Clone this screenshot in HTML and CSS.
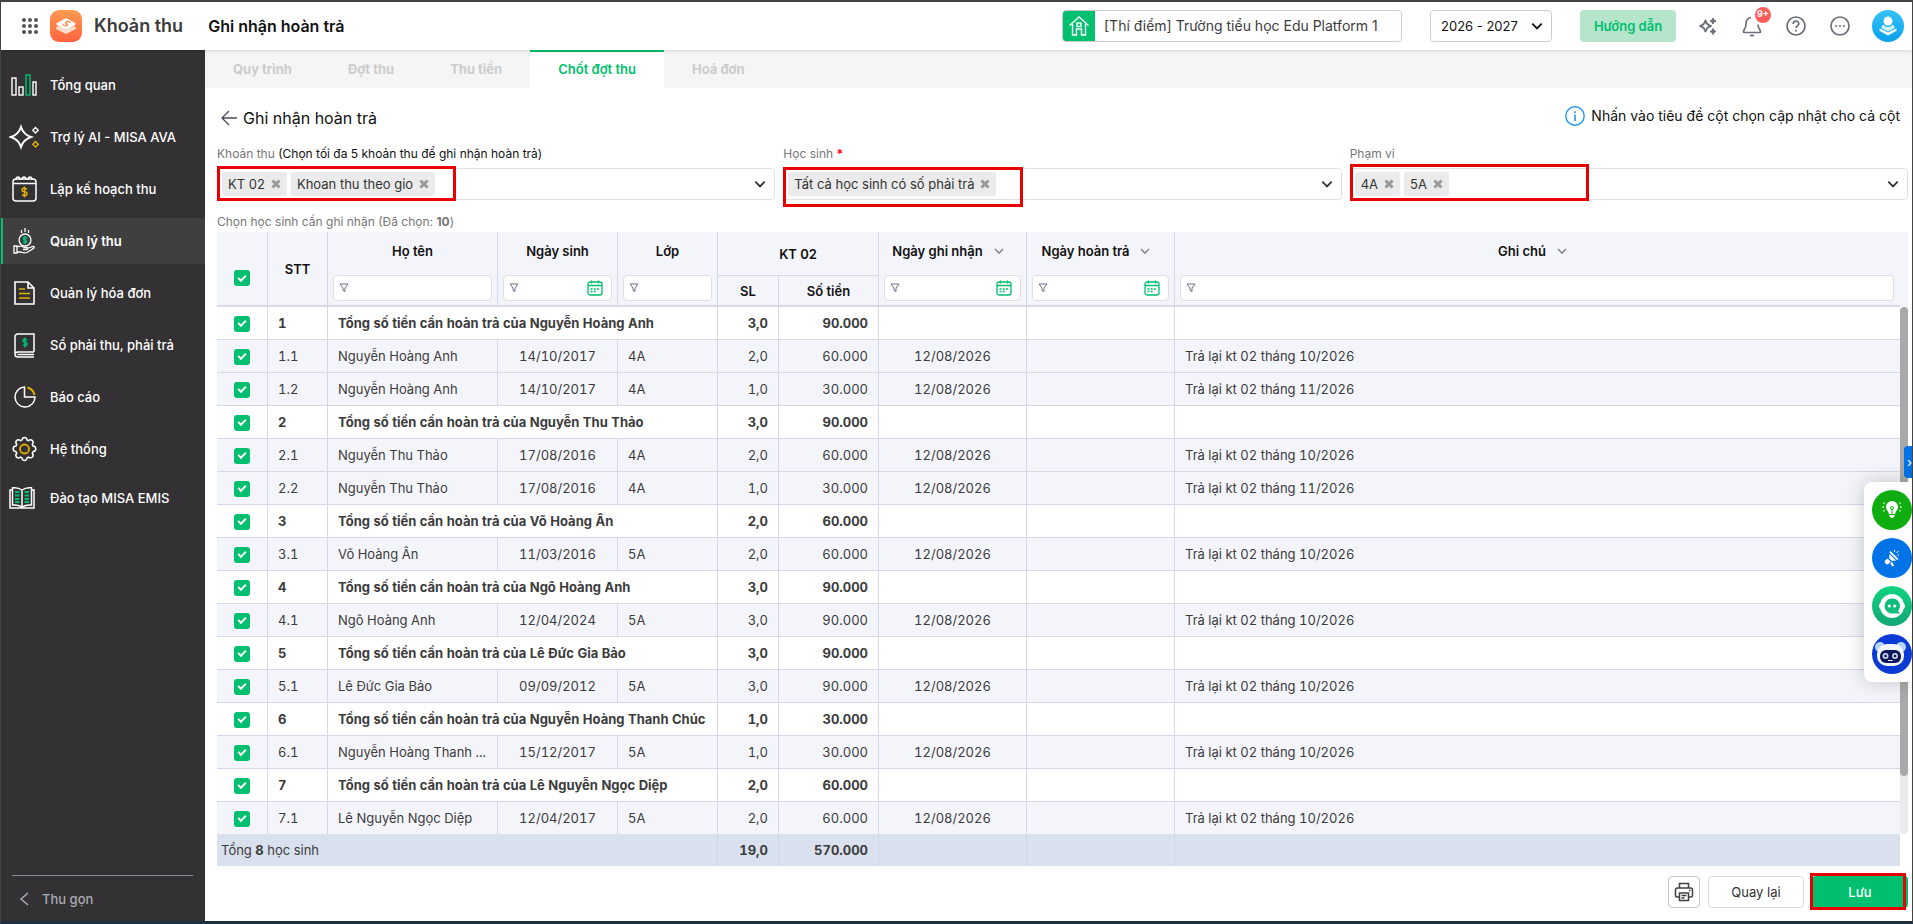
FILE: index.html
```
<!DOCTYPE html>
<html lang="vi">
<head>
  <meta charset="UTF-8">
  <title>Ghi nhận hoàn trả - Khoản thu</title>
  <meta name="viewport" content="width=device-width, initial-scale=1">
  <link rel="stylesheet" href="styles.css">
</head>
<body>
  <svg class="sprite" aria-hidden="true">
    <symbol id="i-down" viewBox="0 0 12 12"><path d="M2 4l4 4 4-4" fill="none" stroke="currentColor" stroke-width="1.6"/></symbol>
    <symbol id="i-close" viewBox="0 0 10 10"><path d="M1.500 1.500l7 7M8.500 1.500l-7 7" stroke="currentColor" stroke-width="3"/></symbol>
    <symbol id="i-filter" viewBox="0 0 10 10"><path d="M1 1h8L6 5v3.500L4 7.500V5z" fill="none" stroke="#6f6c85"/></symbol>
    <symbol id="i-calendar" viewBox="0 0 16 16"><rect x="1" y="2" width="14" height="13" rx="2" fill="none" stroke="#00bf6f" stroke-width="1.300"/><path d="M1 5.500h14M4.500 .5v3M11.500 .5v3" stroke="#00bf6f" stroke-width="1.300"/><path d="M3.500 9h9M3.500 11.500h6" stroke="#00bf6f" stroke-width="1.600" stroke-dasharray="2 1.200"/></symbol>
  </svg>

  <header class="header">
    <button class="icon-btn apps" aria-label="Ứng dụng">
      <svg width="16" height="16" viewBox="0 0 16 16" fill="#555"><circle cx="2" cy="2" r="2"/><circle cx="8" cy="2" r="2"/><circle cx="14" cy="2" r="2"/><circle cx="2" cy="8" r="2"/><circle cx="8" cy="8" r="2"/><circle cx="14" cy="8" r="2"/><circle cx="2" cy="14" r="2"/><circle cx="8" cy="14" r="2"/><circle cx="14" cy="14" r="2"/></svg>
    </button>
    <svg class="logo" width="32" height="32" viewBox="0 0 32 32">
      <defs><linearGradient id="orange" x1="0" y1="0" x2="0" y2="1"><stop offset="0" stop-color="#ff9b50"/><stop offset="1" stop-color="#ff6340"/></linearGradient></defs>
      <rect width="32" height="32" rx="9" fill="url(#orange)"/>
      <path d="M6 17.500l2-1.500 8 4 8-4 2 1.500q.6.900-.4 1.500l-8.600 4.600q-1 .5-2 0L6.400 19q-1-.6-.4-1.500z" fill="#ffe0cc"/>
      <path d="M7 13l8-4.500q1-.5 2 0l8 4.500q1.500 1 0 2l-8 4.500q-1 .5-2 0L7 15q-1.500-1 0-2z" fill="#fff"/>
      <path d="M19.500 12q-2-1.200-3.500.2-1.200 1.400.6 1.800 1.800.4.400 1.500-1.500 1-3.500-.2M12.500 14.500l1.500 1M18.500 11.500l2 1.400" fill="none" stroke="#ff8a4a" stroke-width="1.300"/>
    </svg>
    <span class="app-name">Khoản thu</span>
    <h1>Ghi nhận hoàn trả</h1>
    <button class="org">
      <span class="org-icon"><svg width="24" height="24" viewBox="0 0 24 24" fill="none" stroke="#fff" stroke-width="1.400"><path d="M2.500 11.500L12 3l9.500 8.500M5.500 10v11h4v-6h5v6h4V10"/><rect x="10" y="9" width="4" height="3.500"/></svg></span>
      <span class="org-name">[Thí điểm] Trường tiểu học Edu Platform 1</span>
    </button>
    <div class="year">
      <select aria-label="Năm học"><option>2026 - 2027</option></select>
      <svg width="14" height="14"><use href="#i-down"/></svg>
    </div>
    <button class="guide">Hướng dẫn</button>
    <div class="header-icons">
      <button class="icon-btn" aria-label="Trợ lý AI"><svg width="20" height="20" viewBox="0 0 20 20"><path d="M7.500 4q.8 5.200 6 6-5.200.8-6 6-.8-5.200-6-6 5.200-.8 6-6z" fill="none" stroke="#6b6f7a" stroke-width="1.800"/><path d="M15 2l1 2 2 1-2 1-1 2-1-2-2-1 2-1zM15 12.500l1 2 2 1-2 1-1 2-1-2-2-1 2-1z" fill="#6b6f7a" stroke="#6b6f7a"/></svg></button>
      <button class="icon-btn bell" aria-label="Thông báo"><svg width="20" height="22" viewBox="0 0 20 22" fill="none" stroke="#6b6f7a" stroke-width="1.700"><path d="M9 2.500C5.500 3 4 5.500 4 9c0 5-2.500 5.500-2.500 7.500 0 .8.500 1 1 1h15c.5 0 1-.2 1-1 0-2-2.500-2.500-2.500-7"/><path d="M8 20.500h4"/></svg><span class="badge">9+</span></button>
      <button class="icon-btn" aria-label="Trợ giúp"><svg width="20" height="20" viewBox="0 0 20 20" fill="none" stroke="#6b6f7a" stroke-width="1.700"><circle cx="10" cy="10" r="9"/><path d="M7.200 8c0-3.700 5.600-3.700 5.600-.2 0 2-2.800 2.200-2.800 4.200M10 13.700v1.800"/></svg></button>
      <button class="icon-btn" aria-label="Thêm"><svg width="20" height="20" viewBox="0 0 20 20"><circle cx="10" cy="10" r="9" fill="none" stroke="#6b6f7a" stroke-width="1.700"/><g fill="#6b6f7a"><circle cx="6" cy="10" r="1"/><circle cx="10" cy="10" r="1"/><circle cx="14" cy="10" r="1"/></g></svg></button>
    </div>
    <button class="icon-btn" aria-label="Tài khoản">
      <svg width="32" height="32" viewBox="0 0 32 32"><defs><linearGradient id="sky" x1="0" y1="0" x2="0" y2="1"><stop offset="0" stop-color="#35c3f8"/><stop offset="1" stop-color="#08a0ec"/></linearGradient></defs><circle cx="16" cy="16" r="16" fill="url(#sky)"/><circle cx="16" cy="11" r="4.500" fill="#fff"/><path d="M11 14.500q5 5 10 0l2 3.500-7 3.500L9 18z" fill="#d5f0fd"/><path d="M7.500 18.500L16 22.500l8.500-4v2.300L16 25.500l-8.500-4.700z" fill="#fff"/></svg>
    </button>
  </header>

  <div class="layout">
    <aside class="sidebar">
      <nav>
        <a href="#"><svg width="28" height="26" viewBox="0 0 28 26" fill="none" stroke="#fff" stroke-width="1.400"><rect x="3" y="6" width="4" height="17"/><rect x="10" y="15" width="4" height="8"/><rect x="17" y="3" width="4" height="20" stroke="#00bf6f"/><rect x="24" y="10" width="3" height="13"/></svg>Tổng quan</a>
        <a href="#"><svg width="30" height="26" viewBox="0 0 30 26" fill="none"><path d="M12 3q2.500 7.500 10 10-7.500 2.500-10 10Q9.500 15.500 2 13q7.500-2.500 10-10z" stroke="#fff" stroke-width="2"/><path d="M26.500 3.500l2.700 2.700-2.700 2.700-2.700-2.700z" stroke="#fff" stroke-width="1.400"/><path d="M26.500 17.500l2.700 2.700-2.700 2.700-2.700-2.700z" stroke="#e0b000" stroke-width="1.400"/></svg>Trợ lý AI - MISA AVA</a>
        <a href="#"><svg width="28" height="28" viewBox="0 0 28 28" fill="none" stroke="#fff" stroke-width="1.500"><rect x="4" y="4" width="23" height="22" rx="3"/><path d="M4 8.500h23M7 5q0-3 2-3t2 3M13 5q0-3 2-3t2 3M19 5q0-3 2-3t2 3"/><path d="M18 14q-5-2-5 .8 0 2 2.500 2t2.500 2q0 3-5 1M15.500 11.500v11" stroke="#e0b000"/></svg>Lập kế hoạch thu</a>
        <a href="#" class="active"><svg width="28" height="28" viewBox="0 0 28 28" fill="none" stroke="#fff" stroke-width="1.300"><circle cx="16" cy="13" r="6"/><path d="M16 1v4M12.500 3v3M19.500 3v3"/><path d="M18 11q-3.500-1.500-3.500.5 0 1.500 1.500 1.500t1.500 1.500q0 2-3.500.5M16 9v8" stroke="#00bf6f" stroke-width="1.600"/><path d="M5 19h3v7H5zM8 20q4-2 7 .5h3q1.500 1.500-.5 2H14M18 21.500l6-2q2 0 1 1.500l-7 4.500q-3 1-6-.5H8"/></svg>Quản lý thu</a>
        <a href="#"><svg width="28" height="28" viewBox="0 0 28 28" fill="none" stroke="#fff" stroke-width="1.600"><path d="M6 3h13l6 6v16H6zM19 3v6h6"/><path d="M10 10h6M10 14.500h11M10 19h11" stroke="#e0b000"/></svg>Quản lý hóa đơn</a>
        <a href="#"><svg width="28" height="28" viewBox="0 0 28 28" fill="none" stroke="#fff" stroke-width="1.500"><path d="M25 21V3H9q-3 0-3 3v16.500M25 21H9q-3 0-3 2.500T9 26h16M8.500 23.500H25"/><path d="M18 9q-4-2-4 .6 0 1.700 2 1.700t2 1.800q0 2.400-4 .8M16 6.500v10" stroke="#00bf6f"/></svg>Sổ phải thu, phải trả</a>
        <a href="#"><svg width="28" height="28" viewBox="0 0 28 28" fill="none" stroke="#fff" stroke-width="1.500"><path d="M15.500 4A10 10 0 1 0 26 14H15.500z"/><path d="M18.500 4.500a10 10 0 0 1 7 7.500" stroke="#e0b000" stroke-width="2"/></svg>Báo cáo</a>
        <a href="#"><svg width="28" height="28" viewBox="0 0 28 28" fill="none" stroke="#fff" stroke-width="1.500"><path d="M13 5q.3-2.500 2.500-2.500T18 5l1.500.7Q21.700 4 23.300 5.600T23.300 9.400L24 11q2.800.3 2.800 2.800T24 16.700l-.7 1.500q1.700 2.200.1 3.800t-3.900.1L18 23q-.3 2.500-2.500 2.500T13 23l-1.500-.8q-2.300 1.500-3.900-.1t.1-3.900L7 16.700q-2.800-.3-2.800-2.900T7 11l.7-1.600Q6 7.200 7.600 5.600t3.900.1z"/><circle cx="15.500" cy="14" r="4.500" stroke="#e0b000" stroke-width="1.800"/></svg>Hệ thống</a>
        <a href="#" class="training"><svg width="26" height="24" viewBox="0 0 26 24" fill="none" stroke="#fff" stroke-width="1.500"><path d="M13 4Q9 1 3.500 1.800V19q5.500-.5 9.500 2 4-2.500 9.500-2V1.800Q17 1 13 4v17"/><path d="M3.500 4H1v18h24V4h-2.500"/><path d="M6 6h4.500M6 9.500h4.500M6 13h4.500M6 16h4.500M15.500 6H20M15.500 9.500H20M15.500 13H20M15.500 16H20" stroke="#00bf6f" stroke-width="2"/></svg>Đào tạo MISA EMIS</a>
      </nav>
      <button class="collapse"><svg width="10" height="14" viewBox="0 0 10 14" fill="none" stroke="currentColor" stroke-width="1.500"><path d="M9 1L2 7l7 6"/></svg>Thu gọn</button>
    </aside>

    <main class="main">
      <nav class="tabs">
        <a href="#">Quy trình</a>
        <a href="#">Đợt thu</a>
        <a href="#">Thu tiền</a>
        <a href="#" class="active">Chốt đợt thu</a>
        <a href="#">Hoá đơn</a>
      </nav>

      <div class="content">
        <div class="title-row">
          <button class="icon-btn" aria-label="Trở lại"><svg width="18" height="18" viewBox="0 0 18 18" fill="none" stroke="#4a4a5a" stroke-width="1.300"><path d="M17 9H2M9 2L2 9l7 7"/></svg></button>
          <h2>Ghi nhận hoàn trả</h2>
          <span class="hint"><svg width="20" height="20" viewBox="0 0 20 20" fill="none" stroke="#2196f3"><circle cx="10" cy="10" r="9.200" stroke-width="1.400"/><path d="M10 8.500V15M10 5.200v1.800" stroke-width="1.600"/></svg>Nhấn vào tiêu đề cột chọn cập nhật cho cả cột</span>
        </div>

        <div class="fields">
          <div class="field">
            <label for="fee">Khoản thu <span>(Chọn tối đa 5 khoản thu để ghi nhận hoàn trả)</span></label>
            <div class="select mark-fee">
              <span class="chip">KT 02<button aria-label="Bỏ KT 02"><svg width="10" height="10"><use href="#i-close"/></svg></button></span>
              <span class="chip">Khoan thu theo gio<button aria-label="Bỏ Khoan thu theo gio"><svg width="10" height="10"><use href="#i-close"/></svg></button></span>
              <input type="text" id="fee">
              <svg width="14" height="14"><use href="#i-down"/></svg>
            </div>
          </div>
          <div class="field">
            <label for="student">Học sinh <b>*</b></label>
            <div class="select mark-student">
              <span class="chip">Tất cả học sinh có số phải trả<button aria-label="Bỏ chọn"><svg width="10" height="10"><use href="#i-close"/></svg></button></span>
              <input type="text" id="student">
              <svg width="14" height="14"><use href="#i-down"/></svg>
            </div>
          </div>
          <div class="field">
            <label for="scope">Phạm vi</label>
            <div class="select mark-scope">
              <span class="chip">4A<button aria-label="Bỏ 4A"><svg width="10" height="10"><use href="#i-close"/></svg></button></span>
              <span class="chip">5A<button aria-label="Bỏ 5A"><svg width="10" height="10"><use href="#i-close"/></svg></button></span>
              <input type="text" id="scope">
              <svg width="14" height="14"><use href="#i-down"/></svg>
            </div>
          </div>
        </div>

        <p class="caption">Chọn học sinh cần ghi nhận (Đã chọn: <b>10</b>)</p>

        <div class="grid">
          <table>
            <colgroup>
              <col class="c-check"><col class="c-stt"><col class="c-name"><col class="c-dob"><col class="c-class"><col class="c-qty"><col class="c-money"><col class="c-date"><col class="c-date"><col>
            </colgroup>
            <thead>
              <tr>
                <th rowspan="2" class="check-all"><input type="checkbox" checked aria-label="Chọn tất cả"></th>
                <th rowspan="2">STT</th>
                <th rowspan="2" class="has-filter"><div class="col-title">Họ tên</div><div class="filter"><svg width="10" height="10"><use href="#i-filter"/></svg><input type="text" aria-label="Lọc họ tên"></div></th>
                <th rowspan="2" class="has-filter"><div class="col-title">Ngày sinh</div><div class="filter"><svg width="10" height="10"><use href="#i-filter"/></svg><input type="text" aria-label="Lọc ngày sinh"><svg width="16" height="16"><use href="#i-calendar"/></svg></div></th>
                <th rowspan="2" class="has-filter"><div class="col-title">Lớp</div><div class="filter"><svg width="10" height="10"><use href="#i-filter"/></svg><input type="text" aria-label="Lọc lớp"></div></th>
                <th colspan="2" class="group">KT 02</th>
                <th rowspan="2" class="has-filter"><div class="col-title">Ngày ghi nhận<svg width="12" height="12"><use href="#i-down"/></svg></div><div class="filter"><svg width="10" height="10"><use href="#i-filter"/></svg><input type="text" aria-label="Lọc ngày ghi nhận"><svg width="16" height="16"><use href="#i-calendar"/></svg></div></th>
                <th rowspan="2" class="has-filter"><div class="col-title">Ngày hoàn trả<svg width="12" height="12"><use href="#i-down"/></svg></div><div class="filter"><svg width="10" height="10"><use href="#i-filter"/></svg><input type="text" aria-label="Lọc ngày hoàn trả"><svg width="16" height="16"><use href="#i-calendar"/></svg></div></th>
                <th rowspan="2" class="has-filter last"><div class="col-title">Ghi chú<svg width="12" height="12"><use href="#i-down"/></svg></div><div class="filter"><svg width="10" height="10"><use href="#i-filter"/></svg><input type="text" aria-label="Lọc ghi chú"></div></th>
              </tr>
              <tr>
                <th>SL</th>
                <th>Số tiền</th>
              </tr>
            </thead>
            <tbody id="rows"></tbody>
            <tfoot>
              <tr>
                <td colspan="5" class="total">Tổng <b>8</b> học sinh</td>
                <td class="num"><b>19,0</b></td>
                <td class="num"><b>570.000</b></td>
                <td></td>
                <td></td>
                <td></td>
              </tr>
            </tfoot>
          </table>
          <div class="scroll">
            <div class="scroll-head"></div>
            <div class="scroll-track"><div class="scroll-thumb"></div></div>
          </div>
        </div>

        <div class="actions">
          <button class="btn print" aria-label="In"><svg width="20" height="20" viewBox="0 0 20 20" fill="none" stroke="#3f3f46" stroke-width="1.500"><path d="M5.500 6V1.500h9V6M5.500 15H3q-1.500 0-1.500-1.500V8Q1.500 6 3.500 6h13q2 0 2 2v5.500Q18.500 15 17 15h-2.500"/><path d="M5.500 11h9v7.500h-9zM7.500 13.500h5M7.500 16h3M15 8.500h1.500"/></svg></button>
          <button class="btn">Quay lại</button>
          <button class="btn save">Lưu</button>
        </div>
      </div>
    </main>
  </div>

  <button class="side-toggle" aria-label="Mở">›</button>
  <div class="dock">
    <button aria-label="Góp ý"><svg width="40" height="40" viewBox="0 0 40 40"><circle cx="20" cy="20" r="20" fill="#10ad10"/><path d="M20 11a6 6 0 0 0-6 6c0 3 2.500 4 3 7h6c.5-3 3-4 3-7a6 6 0 0 0-6-6zM17.500 25h5v1.500l-2.500 2-2.500-2z" fill="#fff"/><circle cx="20" cy="18" r="1.500" fill="none" stroke="#10ad10"/><path d="M20 19.500V25" stroke="#10ad10"/><path d="M11.500 13l1 .5M10.500 17h1.500M11.500 21l1-.5M28.500 13l-1 .5M29.500 17H28M28.500 21l-1-.5" stroke="#fff" stroke-width="1.400"/></svg></button>
    <button aria-label="Thông tin mới"><svg width="40" height="40" viewBox="0 0 40 40"><circle cx="20" cy="20" r="20" fill="#0073e6"/><path d="M18.500 13l8 8-1.500 1-7.500-7.500zM17.500 16l6.500 6.500-4 .5-3-3zM15.500 20.500l3 3-2 2.500q-1.500 1-3-.5t-.5-3zM20 23.500l2 4-1.500 1-2.500-3z" fill="#fff"/><path d="M22.500 14v-2M24.500 15l2-2M25.500 17h1.500" stroke="#fff"/></svg></button>
    <button aria-label="Trò chuyện"><svg width="40" height="40" viewBox="0 0 40 40"><defs><linearGradient id="mint" x1="0" y1="0" x2="0" y2="1"><stop offset="0" stop-color="#10d480"/><stop offset="1" stop-color="#12a674"/></linearGradient></defs><circle cx="20" cy="20" r="20" fill="url(#mint)"/><circle cx="20" cy="20" r="12" fill="#fff"/><circle cx="10" cy="20" r="3" fill="#fff"/><circle cx="30" cy="20" r="3" fill="#fff"/><path d="M20 12.500a7.500 7.500 0 1 0 0 15h8l-2-2.500a7.500 7.500 0 0 0-6-12.500z" fill="#11bd7a"/><circle cx="17.300" cy="20" r="1.600" fill="#fff"/><circle cx="22.700" cy="20" r="1.600" fill="#fff"/></svg></button>
    <button aria-label="Trợ lý"><svg width="40" height="40" viewBox="0 0 40 40"><circle cx="20" cy="20" r="20" fill="#0b3bd4"/><circle cx="8" cy="13" r="5" fill="#b5d4fb"/><circle cx="29" cy="13" r="5" fill="#b5d4fb"/><rect x="5" y="10" width="27" height="22" rx="10" fill="#f2f7ff"/><rect x="8" y="16" width="21" height="13" rx="6" fill="#0d1759"/><circle cx="13.500" cy="22" r="3" fill="#c5d0ea"/><circle cx="23" cy="22" r="3" fill="#c5d0ea"/><circle cx="13.500" cy="22" r="1.300" fill="#0d1759"/><circle cx="23" cy="22" r="1.300" fill="#0d1759"/><path d="M16 26.500h4.500" stroke="#fff"/></svg></button>
  </div>

  <script>
    // one entry per student, followed by the detail lines: date of birth, class, quantity, amount, note
    const students = [
      { name: 'Nguyễn Hoàng Anh', qty: '3,0', money: '90.000', lines: [
        ['14/10/2017', '4A', '2,0', '60.000', 'Trả lại kt 02 tháng 10/2026'],
        ['14/10/2017', '4A', '1,0', '30.000', 'Trả lại kt 02 tháng 11/2026'] ] },
      { name: 'Nguyễn Thu Thảo', qty: '3,0', money: '90.000', lines: [
        ['17/08/2016', '4A', '2,0', '60.000', 'Trả lại kt 02 tháng 10/2026'],
        ['17/08/2016', '4A', '1,0', '30.000', 'Trả lại kt 02 tháng 11/2026'] ] },
      { name: 'Võ Hoàng Ân', qty: '2,0', money: '60.000', lines: [
        ['11/03/2016', '5A', '2,0', '60.000', 'Trả lại kt 02 tháng 10/2026'] ] },
      { name: 'Ngô Hoàng Anh', qty: '3,0', money: '90.000', lines: [
        ['12/04/2024', '5A', '3,0', '90.000', 'Trả lại kt 02 tháng 10/2026'] ] },
      { name: 'Lê Đức Gia Bảo', qty: '3,0', money: '90.000', lines: [
        ['09/09/2012', '5A', '3,0', '90.000', 'Trả lại kt 02 tháng 10/2026'] ] },
      { name: 'Nguyễn Hoàng Thanh Chúc', short: 'Nguyễn Hoàng Thanh ...', qty: '1,0', money: '30.000', lines: [
        ['15/12/2017', '5A', '1,0', '30.000', 'Trả lại kt 02 tháng 10/2026'] ] },
      { name: 'Lê Nguyễn Ngọc Diệp', qty: '2,0', money: '60.000', lines: [
        ['12/04/2017', '5A', '2,0', '60.000', 'Trả lại kt 02 tháng 10/2026'] ] }
    ];
    const recordDate = '12/08/2026';

    function checkCell(no) {
      return `<td class="check"><input type="checkbox" checked aria-label="Chọn dòng ${no}"></td><td>${no}</td>`;
    }

    let html = '';
    students.forEach((s, i) => {
      html += `<tr class="sum">${checkCell(i + 1)}
        <td colspan="3">Tổng số tiền cần hoàn trả của ${s.name}</td>
        <td class="num">${s.qty}</td><td class="num">${s.money}</td><td></td><td></td><td></td></tr>`;
      s.lines.forEach((l, j) => {
        html += `<tr class="line">${checkCell((i + 1) + '.' + (j + 1))}
          <td>${s.short || s.name}</td><td class="date">${l[0]}</td><td>${l[1]}</td>
          <td class="num">${l[2]}</td><td class="num">${l[3]}</td>
          <td class="date">${recordDate}</td><td></td><td>${l[4]}</td></tr>`;
      });
    });
    document.getElementById('rows').innerHTML = html;
  </script>
</body>
</html>
```
FILE: styles.css
```
:root {
  --green: #00bf6f;
  --dark: #333134;
  --head: #f4f5fa;
  --line: #d5d8e8;
  --border: #e0e0e4;
  --red: #e80000;
}
*, *::after { box-sizing: border-box; }
body {
  margin: 0;
  min-height: 100vh;
  display: flex;
  flex-direction: column;
  border: 1px solid #444;
  border-top-width: 2px;
  border-bottom: 3px solid #1d2f40;
  font: 13px/16px Inter, "Noto Sans", sans-serif;
  color: #3c3c3c;
  background: #fff;
}
button, input, select { font: inherit; color: inherit; }
button { border: 0; padding: 0; background: none; cursor: pointer; }
a { text-decoration: none; color: inherit; }
svg { flex: none; }
.sprite { position: absolute; width: 0; height: 0; }
.icon-btn { display: flex; align-items: center; }

/* header */
.header {
  height: 48px;
  display: flex;
  align-items: center;
  padding: 0 8px 0 21px;
  position: relative;
  z-index: 2;
  box-shadow: 0 1px 4px rgba(0,0,0,.14);
  background: #fff;
}
.logo { margin: 0 12px; }
.app-name { font-size: 18px; font-weight: 600; }
h1 {
  margin: 0 auto 0 25px;
  font-size: 16px;
  font-weight: 600;
  color: #111;
}
.org {
  display: flex;
  align-items: center;
  width: 340px;
  height: 32px;
  border: 1px solid #ccc;
  border-radius: 4px;
  font-size: 14px;
  overflow: hidden;
}
.org-icon {
  display: flex;
  align-items: center;
  justify-content: center;
  width: 32px;
  height: 32px;
  background: var(--green);
}
.org-name { padding-left: 9px; }
.year {
  display: grid;
  align-items: center;
  width: 122px;
  margin: 0 28px;
  color: #111;
}
.year select, .year svg { grid-area: 1 / 1; }
.year select {
  appearance: none;
  height: 32px;
  padding: 0 10px;
  border: 1px solid #ccc;
  border-radius: 4px;
  background: #fff;
}
.year svg { justify-self: end; margin-right: 8px; pointer-events: none; }
.guide {
  width: 96px;
  height: 32px;
  border-radius: 4px;
  background: #b5e5ca;
  color: var(--green);
  font-weight: 600;
}
.header-icons { display: flex; gap: 24px; margin: 0 22px; }
.bell { position: relative; }
.badge {
  position: absolute;
  top: -8px;
  right: -9px;
  width: 16px;
  height: 16px;
  border-radius: 50%;
  background: #ff5c5c;
  color: #fff;
  font-size: 9px;
  line-height: 14px;
  font-weight: 700;
  text-align: center;
}

/* sidebar */
.layout { flex: 1; display: flex; }
.sidebar {
  width: 204px;
  flex: none;
  display: flex;
  flex-direction: column;
  justify-content: space-between;
  background: var(--dark);
  color: #fff;
}
.sidebar nav {
  display: flex;
  flex-direction: column;
  gap: 6px;
  padding-top: 12px;
  font-weight: 500;
}
.sidebar nav a {
  display: grid;
  grid-template-columns: 32px 1fr;
  gap: 9px;
  align-items: center;
  height: 46px;
  padding-left: 8px;
}
.sidebar nav .active {
  border-left: 2px solid var(--green);
  padding-left: 6px;
  background: #403f40;
  font-weight: 600;
}
.sidebar nav .training { height: 40px; }
.collapse {
  display: flex;
  align-items: center;
  gap: 13px;
  height: 46px;
  margin: 0 12px 0 11px;
  padding-left: 7px;
  border-top: 1px solid #8d8c90;
  color: #a9abb3;
  font-weight: 500;
}

/* tabs */
.main { flex: 1; min-width: 0; display: flex; flex-direction: column; }
.tabs {
  display: flex;
  height: 38px;
  background: #f5f5f5;
  color: #ccc;
  font-weight: 700;
}
.tabs a { padding: 11px 28px 0; }
.tabs .active {
  padding-top: 9px;
  border-top: 2px solid var(--green);
  background: #fff;
  color: var(--green);
  font-weight: 600;
}

/* page content */
.content { flex: 1; padding: 14px 4px 12px 12px; }
.title-row { display: flex; align-items: center; height: 32px; padding: 0 8px 0 3px; }
h2 {
  margin: 0 auto 0 5px;
  font-size: 16px;
  line-height: 20px;
  font-weight: 400;
  color: #111;
}
.hint {
  display: flex;
  align-items: center;
  align-self: flex-start;
  gap: 6px;
  height: 28px;
  font-size: 14px;
  color: #111;
}
.fields {
  display: grid;
  grid-template-columns: repeat(3, 1fr);
  gap: 8px;
  margin-top: 12px;
}
.field label {
  display: block;
  margin-bottom: 6px;
  font-size: 12px;
  color: #777;
}
.field label span { color: #111; }
.field label b { color: #f00; }
.select {
  position: relative;
  display: flex;
  align-items: center;
  gap: 4px;
  height: 32px;
  padding: 0 7px 0 4px;
  border: 1px solid var(--border);
  border-radius: 4px;
  color: #333;
}
.select input {
  flex: 1;
  min-width: 0;
  border: 0;
  outline: 0;
  background: none;
}
.chip {
  display: flex;
  align-items: center;
  gap: 6px;
  height: 24px;
  padding: 0 6px;
  border-radius: 3px;
  background: #ebebeb;
}
.chip button { display: flex; color: #999; }
/* red frames around the parts to fill in */
.select::after, .btn.save::after {
  content: "";
  position: absolute;
  border: 3px solid var(--red);
  pointer-events: none;
}
.select::after { top: -5px; left: -1px; width: 43%; height: 37px; }
.mark-student::after { top: -2px; height: 40px; }
.mark-fee::after { top: -3px; height: 35px; }
.caption {
  margin: 14px 0 2px;
  font-size: 12px;
  color: #777;
}

/* table */
.grid { display: flex; }
table {
  flex: 1;
  width: 100%;
  min-width: 0;
  table-layout: fixed;
  border-collapse: separate;
  border-spacing: 0;
}
.c-check { width: 51px; }
.c-stt { width: 60px; }
.c-name { width: 170px; }
.c-dob { width: 120px; }
.c-class { width: 100px; }
.c-qty { width: 61px; }
.c-money { width: 100px; }
.c-date { width: 148px; }
th {
  height: 31px;
  padding: 0;
  background: var(--head);
  border-right: 1px solid var(--line);
  border-bottom: 2px solid #d9dce4;
  font-weight: 600;
  color: #111;
}
th.group { height: 44px; border-bottom: 1px solid var(--line); }
.last, td:last-child { border-right: 0; }
.check-all { padding-top: 18px; }
.has-filter { padding: 6px 5px 4px; vertical-align: bottom; }
.last { padding-right: 6px; }
.col-title {
  display: flex;
  align-items: center;
  justify-content: center;
  gap: 10px;
  height: 25px;
  margin-bottom: 12px;
}
.col-title svg { color: #888; margin-right: 8px; }
.filter {
  display: flex;
  align-items: center;
  gap: 6px;
  height: 26px;
  padding: 0 8px 0 5px;
  border: 1px solid var(--border);
  border-radius: 4px;
  background: #fff;
}
.filter input { flex: 1; width: 0; min-width: 0; border: 0; outline: 0; }
td {
  height: 33px;
  padding: 0 10px;
  border-right: 1px solid var(--line);
  border-bottom: 1px solid var(--line);
  white-space: nowrap;
  font-variant-numeric: tabular-nums;
}
tbody tr:last-child td { height: 32px; border-bottom: 0; }
.line td { background: var(--head); }
.sum td, td b { font-weight: 700; }
.check { padding: 0; text-align: center; }
.num { text-align: right; }
.date { text-align: center; }
tfoot td {
  height: 32px;
  background: #d9e0ee;
  border-bottom: 0;
  border-right-color: #cfd6e8;
}
tfoot .total { padding-left: 4px; }
input[type="checkbox"] {
  appearance: none;
  display: inline-grid;
  place-items: center;
  width: 16px;
  height: 16px;
  margin: 0;
  border-radius: 3px;
  background: var(--green);
  vertical-align: middle;
}
input[type="checkbox"]::before {
  content: "";
  width: 6px;
  height: 3px;
  margin-bottom: 2px;
  border: solid #fff;
  border-width: 0 0 2px 2px;
  transform: rotate(-45deg);
}
.scroll { width: 8px; display: flex; flex-direction: column; padding-bottom: 32px; }
.scroll-head { height: 75px; background: var(--head); }
.scroll-track { flex: 1; border-radius: 4px; background: #ebebeb; }
.scroll-thumb { height: 89%; border-radius: 4px; background: #a9a9a9; }

/* bottom buttons */
.actions { display: flex; justify-content: flex-end; gap: 8px; margin-top: 10px; }
.btn {
  width: 96px;
  height: 32px;
  border: 1px solid var(--border);
  border-radius: 4px;
  color: #333;
}
.btn.print {
  display: grid;
  place-items: center;
  width: 32px;
  border-color: #c4c4c8;
}
.btn.save {
  position: relative;
  border: 0;
  background: var(--green);
  color: #fff;
  font-weight: 500;
}
.btn.save::after { top: -3px; right: 2px; bottom: -2px; left: -2px; }

/* floating widgets on the right edge */
.side-toggle {
  position: fixed;
  top: 446px;
  right: 1px;
  z-index: 3;
  width: 8px;
  height: 32px;
  border-radius: 4px 0 0 4px;
  background: #0073e6;
  color: #fff;
  line-height: 28px;
  text-align: right;
}
.dock {
  position: fixed;
  top: 482px;
  right: 1px;
  z-index: 3;
  display: flex;
  flex-direction: column;
  gap: 8px;
  padding: 8px 0 8px 8px;
  border-radius: 8px 0 0 8px;
  background: #fff;
  box-shadow: 0 0 20px rgba(0,0,0,.2);
}
.dock button { display: flex; }
```
